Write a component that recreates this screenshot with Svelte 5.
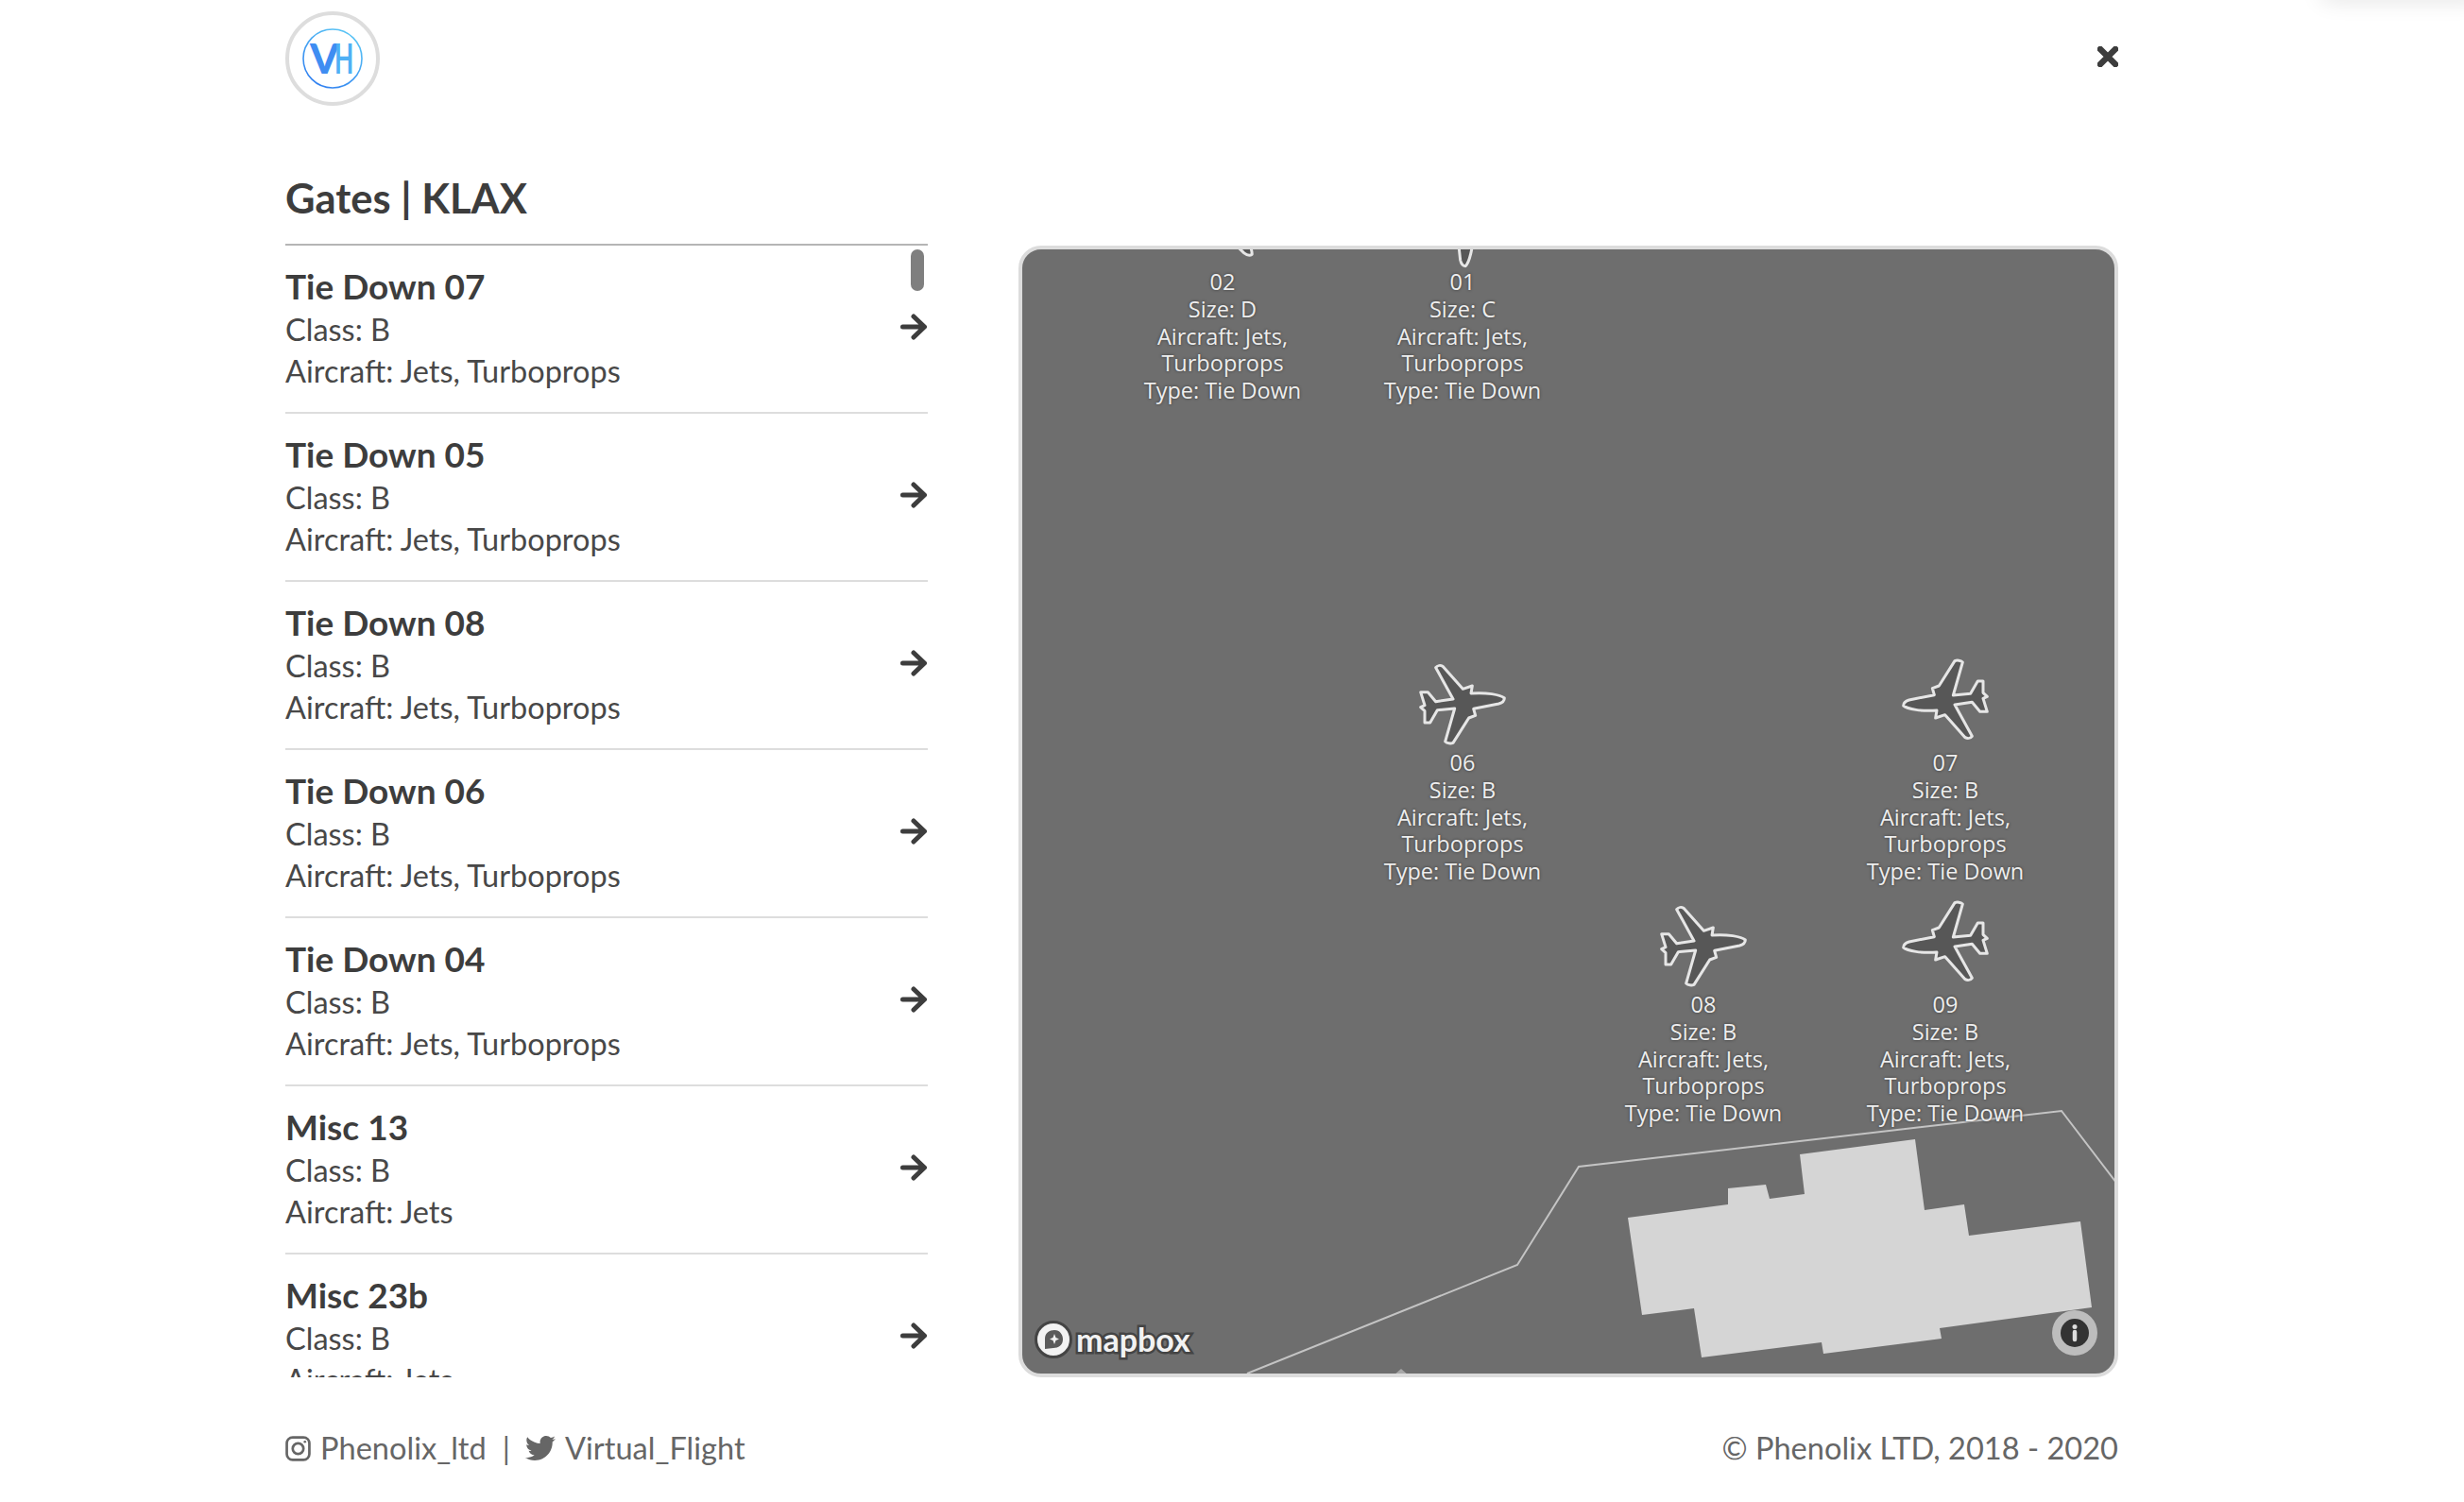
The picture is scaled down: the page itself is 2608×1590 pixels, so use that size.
<script>
  const gates = [
    { name: 'Tie Down 07', aircraft: 'Jets, Turboprops' },
    { name: 'Tie Down 05', aircraft: 'Jets, Turboprops' },
    { name: 'Tie Down 08', aircraft: 'Jets, Turboprops' },
    { name: 'Tie Down 06', aircraft: 'Jets, Turboprops' },
    { name: 'Tie Down 04', aircraft: 'Jets, Turboprops' },
    { name: 'Misc 13', aircraft: 'Jets' },
    { name: 'Misc 23b', aircraft: 'Jets' }
  ];

  // x / y are relative to the map, rot is the plane's heading
  const pins = [
    { id: '02', size: 'D', x: 212, y: -80, rot: 55 },
    { id: '01', size: 'C', x: 466, y: -80, rot: 95 },
    { id: '06', size: 'B', x: 466, y: 429, rot: 0 },
    { id: '07', size: 'B', x: 977, y: 429, rot: 180 },
    { id: '08', size: 'B', x: 721, y: 685, rot: 0 },
    { id: '09', size: 'B', x: 977, y: 685, rot: 180 }
  ];

  const planePath = 'M458 207C445 196 400 188 352 192L356 168L326 178L262 106C255 102 245 103 240 110L295 210L240 218L215 188H192L205 230L192 236L205 248L205 285H222L245 245L300 240L270 345C276 351 288 352 295 349L345 270L366 262L360 241L440 225C450 222 458 215 458 207Z';
</script>

<div class="page">
  <div class="corner-glow"></div>

  <header class="top">
    <div class="logo">
      <svg viewBox="0 0 64 64" width="64" height="64">
        <defs>
          <linearGradient id="ring" x1="0.8" y1="0" x2="0.2" y2="1">
            <stop offset="0" stop-color="#5cc8f5" />
            <stop offset="1" stop-color="#2f7df0" />
          </linearGradient>
        </defs>
        <circle cx="32" cy="32" r="31" fill="none" stroke="url(#ring)" stroke-width="1.6" />
        <text x="8" y="48" class="logo-v" fill="#3f8df2">V</text>
        <text transform="translate(34 48) scale(0.6 1)" class="logo-h" fill="#4fb0f5">H</text>
      </svg>
    </div>
    <svg class="close" viewBox="0 0 22 22" width="22" height="22">
      <path d="M3 3 19 19M19 3 3 19" />
    </svg>
  </header>

  <h1 class="title">Gates | KLAX</h1>

  <main class="content">
    <section class="list-wrap">
      <div class="list">
        {#each gates as gate}
          <div class="gate">
            <div class="gate-info">
              <div class="gate-name">{gate.name}</div>
              <div class="gate-line">Class: B</div>
              <div class="gate-line">Aircraft: {gate.aircraft}</div>
            </div>
            <svg class="arrow" viewBox="0 0 28 28" width="28" height="28">
              <path d="M2.5 14H25M14 3 25.5 14 14 25" />
            </svg>
          </div>
        {/each}
      </div>
      <div class="scroll-thumb"></div>
    </section>

    <section class="map">
      <svg class="map-bg" viewBox="1082 264 1156 1190" width="1156" height="1190">
        <polyline class="taxi" points="1320,1454 1606,1339 1671,1235 2182,1176 2240,1252" />
        <polygon class="building" points="1723,1289 1829,1275 1829,1258 1869,1254 1873,1269 1910,1264 1905,1222 2027,1206 2037,1281 2079,1275 2084,1308 2202,1293 2214,1384 2053,1406 2055,1417 1930,1433 1928,1421 1801,1437 1793,1385 1738,1392" />
        <polygon class="taxi-dot" points="1483,1449 1491,1456 1475,1456" />
      </svg>

      {#each pins as pin}
        <div class="pin" style="left: {pin.x}px; top: {pin.y}px">
          <svg class="plane" viewBox="175 69 300 300" width="100" height="100">
            <path d={planePath} transform="rotate({pin.rot} 325 {pin.rot === 180 ? 219 : 228})" />
          </svg>
          <div class="pin-text">
            <div>{pin.id}</div>
            <div>Size: {pin.size}</div>
            <div>Aircraft: Jets, Turboprops</div>
            <div>Type: Tie Down</div>
          </div>
        </div>
      {/each}

      <div class="mapbox">
        <svg viewBox="0 0 40 40" width="40" height="40">
          <circle cx="20" cy="20" r="18.5" fill="#f2f2f2" stroke="#444" stroke-width="3" />
          <path d="M11 30V19C11 13 16 10 21 10C27 10 30 15 30 20C30 26 25 29 20 29C17 29 14 30 11 30Z" fill="#5a5a5a" />
          <path d="M21 14 22.5 18 26 19.5 22.5 21 21 25 19.500 21 16 19.500 19.500 18Z" fill="#f2f2f2" />
        </svg>
        <span class="mapbox-word">mapbox</span>
      </div>

      <div class="info">
        <svg viewBox="0 0 30 30" width="30" height="30">
          <circle cx="15" cy="15" r="15" fill="#333" />
          <circle cx="15" cy="8.500" r="2.500" fill="#ddd" />
          <path d="M15 14V22" stroke="#ddd" stroke-width="4.500" stroke-linecap="round" />
        </svg>
      </div>
    </section>
  </main>

  <footer class="foot">
    <div class="social">
      <svg class="insta" viewBox="0 0 26 26" width="27" height="27">
        <rect x="1.500" y="1.500" width="23" height="23" rx="6" />
        <circle cx="13" cy="13" r="5.500" />
        <circle cx="20" cy="6" r="1.300" class="dot" />
      </svg>
      <span>Phenolix_ltd</span>
      <span class="sep">|</span>
      <svg class="bird" viewBox="0 0 512 512" width="32" height="32">
        <path d="M459 152c.3 4.500.3 9.100.3 13.600 0 138.700-105.600 298.600-298.600 298.600-59.500 0-114.700-17.200-161.100-47.100 8.400 1 16.600 1.300 25.300 1.300 49.100 0 94.200-16.600 130.300-44.800-46.100-1-84.800-31.200-98.100-72.800 6.500 1 13 1.600 19.800 1.600 9.400 0 18.800-1.300 27.600-3.600-48.100-9.700-84.100-52-84.100-103v-1.300c14 7.800 30.200 12.700 47.400 13.300-28.300-18.800-46.800-51-46.800-87.400 0-19.500 5.200-37.400 14.300-53 51.700 63.700 129.300 105.300 216.400 109.800-1.600-7.800-2.600-15.900-2.600-24 0-57.800 46.800-104.900 104.900-104.900 30.200 0 57.500 12.700 76.700 33.100 23.700-4.500 46.500-13.300 66.600-25.300-7.800 24-24.400 44.200-46.100 57.200 21.100-2.300 41.600-8.100 60.400-16.200-14.300 20.800-32.200 39.300-52.600 54.300z" />
      </svg>
      <span>Virtual_Flight</span>
    </div>
    <div class="copy">© Phenolix LTD, 2018 - 2020</div>
  </footer>
</div>

<style>
  :global(body) {
    margin: 0;
    background: #fff;
    overflow: hidden;
  }

  .page {
    width: 1940px;
    height: 1590px;
    margin-left: 302px;
    padding-top: 12px;
    box-sizing: border-box;
    font-family: Lato, "Open Sans", sans-serif;
    color: #3d3d3d;
  }

  .corner-glow {
    position: absolute;
    top: -20px;
    right: -20px;
    width: 170px;
    height: 20px;
    box-shadow: 0 0 24px rgba(0, 0, 0, 0.12);
  }

  .top {
    display: flex;
    justify-content: space-between;
    align-items: flex-start;
    height: 100px;
  }

  .logo {
    width: 100px;
    height: 100px;
    box-sizing: border-box;
    border: 4px solid #ddd;
    border-radius: 50%;
    display: flex;
    align-items: center;
    justify-content: center;
  }

  .logo-v {
    font-family: Lato, sans-serif;
    font-size: 44px;
    font-weight: 900;
  }

  .logo-h {
    font-family: Lato, sans-serif;
    font-size: 44px;
    font-weight: 700;
  }

  .close {
    margin-top: 37px;
    fill: none;
    stroke: #3d3d3d;
    stroke-width: 6.500;
    stroke-linecap: round;
  }

  .title {
    margin: 69px 0 0;
    height: 77px;
    font-size: 43.500px;
    line-height: 56px;
    font-weight: 700;
  }

  .content {
    display: grid;
    grid-template-columns: 680px 1164px;
    justify-content: space-between;
    height: 1200px;
  }

  .list-wrap {
    position: relative;
    height: 1200px;
    overflow: hidden;
    border-top: 2px solid #b5b5b5;
    box-sizing: border-box;
  }

  .gate {
    display: flex;
    align-items: center;
    justify-content: space-between;
    height: 173px;
    padding-bottom: 3px;
    border-bottom: 2px solid #ddd;
  }

  .gate-name {
    font-size: 37px;
    line-height: 48px;
    font-weight: 700;
  }

  .gate-line {
    font-size: 32.500px;
    line-height: 44px;
    color: #484848;
  }

  .arrow {
    margin: 0 1px 2px 0;
    fill: none;
    stroke: #3d3d3d;
    stroke-width: 5;
    stroke-linecap: round;
    stroke-linejoin: round;
  }

  .scroll-thumb {
    position: absolute;
    top: 4px;
    right: 4px;
    width: 14px;
    height: 44px;
    border-radius: 7px;
    background: #7f7f7f;
  }

  .map {
    position: relative;
    height: 1198px;
    margin-top: 2px;
    box-sizing: border-box;
    border: 4px solid #dcdcdc;
    border-radius: 24px;
    background: #6e6e6e;
    overflow: hidden;
  }

  .map-bg {
    position: absolute;
    top: 0;
    left: 0;
  }

  .taxi {
    fill: none;
    stroke: #c4c4c4;
    stroke-width: 2;
  }

  .building {
    fill: #d5d5d5;
  }

  .taxi-dot {
    fill: #a8a8a8;
  }

  .pin {
    position: absolute;
    width: 200px;
    transform: translateX(-50%);
    display: flex;
    flex-direction: column;
    align-items: center;
  }

  .plane {
    overflow: visible;
    fill: #575757;
    stroke: #e6e6e6;
    stroke-width: 9;
    stroke-linejoin: round;
  }

  .pin-text {
    font-family: "Open Sans", sans-serif;
    font-size: 23.500px;
    line-height: 28.800px;
    text-align: center;
    color: #eee;
    text-shadow: 0 0 3px #333;
  }

  .mapbox {
    position: absolute;
    left: 13px;
    bottom: 16px;
    display: flex;
    align-items: center;
    gap: 4px;
  }

  .mapbox-word {
    font-family: Lato, sans-serif;
    font-size: 34px;
    line-height: 40px;
    font-weight: 700;
    color: #f2f2f2;
    -webkit-text-stroke: 5px #444;
    paint-order: stroke fill;
  }

  .info {
    position: absolute;
    right: 18px;
    bottom: 19px;
    width: 48px;
    height: 48px;
    border-radius: 50%;
    background: #bdbdbd;
    display: flex;
    align-items: center;
    justify-content: center;
  }

  .foot {
    display: flex;
    justify-content: space-between;
    align-items: center;
    margin-top: 53px;
    font-size: 32.600px;
    line-height: 44px;
    color: #666;
  }

  .social {
    display: flex;
    align-items: center;
    gap: 10px;
  }

  .sep {
    margin: 0 6px 0 7px;
  }

  .insta {
    fill: none;
    stroke: #666;
    stroke-width: 2.600;
  }

  .insta .dot {
    fill: #666;
    stroke: none;
  }

  .bird {
    fill: #666;
  }
</style>
